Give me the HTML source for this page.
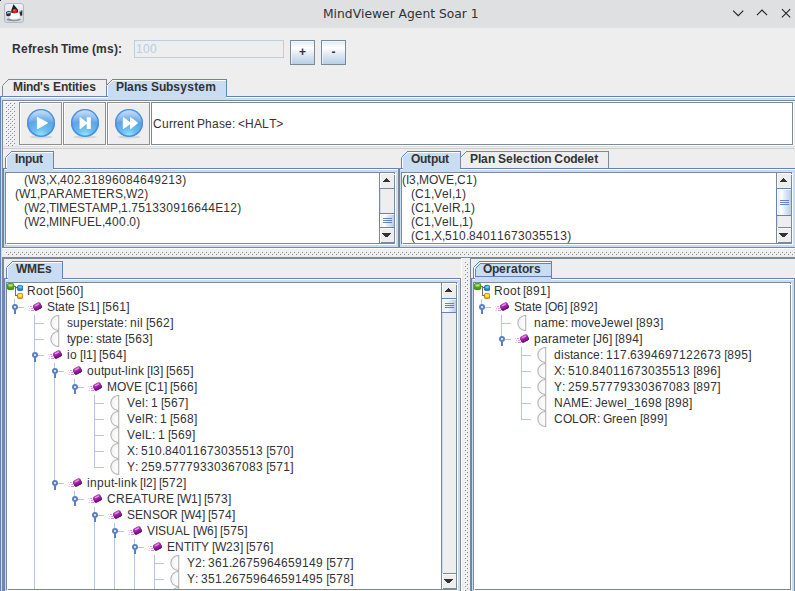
<!DOCTYPE html>
<html lang="en"><head><meta charset="utf-8">
<title>MindViewer Agent Soar 1</title>
<style>
html,body{margin:0;padding:0}
body{width:795px;height:591px;overflow:hidden;background:#eeeeee;position:relative;
 font-family:"Liberation Sans",sans-serif;font-size:12px;color:#333333;
 font-kerning:none;font-variant-ligatures:none;-webkit-font-smoothing:antialiased}
#app{position:absolute;left:0;top:0;width:795px;height:591px;overflow:hidden}
#app i,#app .abs,#app .t,#app .btn,#app .clip{position:absolute;display:block}
#app i{font-style:normal}
.clip{overflow:hidden}
.t{line-height:14px;height:14px;white-space:pre}
.b{font-weight:bold}
#titlebar{position:absolute;left:0;top:0;width:795px;height:28px;background:#dee0e2}
#title{position:absolute;left:323px;top:1px;height:27px;line-height:27px;white-space:pre;
 font-family:"DejaVu Sans","Liberation Sans",sans-serif;font-size:12.3px;color:#2f3236}
.btn{border:1px solid #7a8a99;background:linear-gradient(#dde8f3 0%,#fff 30%,#dde8f3 60%,#b8cfe5 100%);box-shadow:inset 1px 1px 0 rgba(255,255,255,.55)}
.tbtn{width:41px;height:41px;border:1px solid #8e8e8e;box-shadow:inset 1px 1px 0 #fbfbfb,1px 1px 0 #fbfbfb}
.thumb{box-sizing:border-box;border:1px solid #6382bf;border-right-color:#7a8a99;background:linear-gradient(90deg,#dde8f3 0%,#fff 30%,#dde8f3 60%,#b8cfe5 100%);box-shadow:inset 1px 1px 0 rgba(255,255,255,.75)}
.bump{background-image:radial-gradient(circle at 1.5px 1.5px,#7a8a99 0.6px,transparent 0.8px),radial-gradient(circle at 3.5px 3.5px,#7a8a99 0.6px,transparent 0.8px),radial-gradient(circle at 0.5px 0.5px,#fff 0.6px,transparent 0.8px),radial-gradient(circle at 2.5px 2.5px,#fff 0.6px,transparent 0.8px);background-size:4px 4px}
.n33{letter-spacing:-0.33px}
.n1{letter-spacing:-0.01px}
.p15{letter-spacing:0.15px}
.p33{letter-spacing:0.33px}
</style></head>
<body>
<svg width="0" height="0" style="position:absolute"><defs>
<linearGradient id="gD" x1="0" y1="0" x2="0" y2="1"><stop offset="0" stop-color="#f1f1f6"/><stop offset="1" stop-color="#d4d6de"/></linearGradient>
<linearGradient id="gG" x1="0" y1="0" x2="0" y2="1"><stop offset="0" stop-color="#86cc3e"/><stop offset="1" stop-color="#378f0a"/></linearGradient>
<linearGradient id="gB" x1="0" y1="0" x2="0" y2="1"><stop offset="0" stop-color="#44aef2"/><stop offset="1" stop-color="#1574c4"/></linearGradient>
<linearGradient id="gY" x1="0" y1="0" x2="0" y2="1"><stop offset="0" stop-color="#ffe033"/><stop offset="1" stop-color="#eda400"/></linearGradient>
<linearGradient id="gP" x1="0" y1="0" x2="0" y2="1"><stop offset="0" stop-color="#d85ade"/><stop offset="0.45" stop-color="#ab1eb3"/><stop offset="1" stop-color="#800b88"/></linearGradient>
<linearGradient id="gPs" x1="0" y1="0" x2="0" y2="1"><stop offset="0" stop-color="#a83ab0"/><stop offset="1" stop-color="#3c0742"/></linearGradient>
<linearGradient id="gGl" x1="0" y1="0" x2="0" y2="1"><stop offset="0" stop-color="#fff" stop-opacity=".5"/><stop offset="1" stop-color="#fff" stop-opacity=".08"/></linearGradient>
<linearGradient id="gL" x1="0" y1="0" x2="1" y2="0"><stop offset="0" stop-color="#f0f0f0"/><stop offset="1" stop-color="#ffffff"/></linearGradient>
<radialGradient id="gT" cx="0.5" cy="0.98" r="0.95"><stop offset="0" stop-color="#96ebfc"/><stop offset="0.3" stop-color="#6cbcf0"/><stop offset="0.7" stop-color="#5a9fe6"/><stop offset="1" stop-color="#8fc0f2"/></radialGradient>
</defs></svg>
<div id="app">
<div id="titlebar">
<svg class="abs" style="left:4px;top:3px" width="20" height="20" viewBox="0 0 20 20">
<rect x="0.5" y="0.5" width="19" height="19" rx="2.5" fill="url(#gD)" stroke="#a9bccf"/>
<ellipse cx="9.6" cy="16.6" rx="7.2" ry="1.6" fill="#4a4a4a" opacity=".5"/>
<path d="M6.4 9 Q10.5 7 14.6 8.4 L16 15.6 Q11 17.6 5.8 15.8 Z" fill="#fafafa"/>
<path d="M9 16.8 Q11 15.6 15.6 15.9 L16 15.6 Q11 17.6 5.8 15.8 Z" fill="#c9c9c9"/>
<path d="M9.4 1.2 Q11.6 3.6 13.8 6.6 L14.2 9.2 Q10.6 11.2 7.2 9.6 L7.4 7 Q8.6 4 9.4 1.2 Z" fill="#1e1e1e"/>
<path d="M2 9 Q4.4 7.6 6.8 8.2 L6.6 12.6 Q4.2 13.6 2.4 12.8 Z" fill="#2b2b2b"/>
<path d="M2.8 9.4 Q4.6 8.4 6.4 8.8 L6.3 10.2 Q4.6 10.4 2.9 10.8 Z" fill="#9fcaf2"/>
<path d="M15.4 9.6 L16 7.4 L16.9 9.6 L17.6 7 L18.4 7.6 L18.2 12.4 L16.6 13 Z" fill="#2b2b2b"/>
<circle cx="10.8" cy="8" r="2.3" fill="#ee1c25"/>
<circle cx="10.2" cy="7.3" r=".8" fill="#ff7a80"/>
</svg>
<i style="left:0;top:0;width:1px;height:1px;background:#2a2a2a"></i>
<div id="title">MindViewer Agent Soar 1</div>
<svg class="abs" style="left:728px;top:4px" width="66" height="20" viewBox="728 4 66 20" fill="none" stroke="#232629" stroke-width="1.1">
<path d="M733.1 10.6 L738.2 15.7 L743.3 10.6"/>
<path d="M756.9 15.2 L762 10.1 L767.1 15.2"/>
<path d="M781.9 9.1 L790.2 17.4 M790.2 9.1 L781.9 17.4"/>
</svg>
</div>
<div class="t b" style="left:12px;top:42px;"><span class="p33">Re</span>f<span class="p33">res</span><span class="n33">h Ti</span><span class="p33">me</span><span class="n33"> </span>(<span class="p33">ms</span>):</div>
<i style="left:134px;top:40px;width:148px;height:16px;border:1px solid #b8cfe5"></i>
<div class="t" style="left:136px;top:42px;color:#b8cfe5;"><span class="p33">100</span></div>
<div class="btn" style="left:290px;top:40px;width:23px;height:23px"><div class="t b" style="left:0px;top:4px;width:23px;text-align:center;"><span class="n1">+</span></div></div>
<div class="btn" style="left:321px;top:40px;width:23px;height:23px"><div class="t b" style="left:0px;top:4px;width:23px;text-align:center;">-</div></div>
<i style="left:0px;top:96px;width:795px;height:4px;background:#c8ddf2;"></i>
<i style="left:0px;top:96px;width:795px;height:1px;background:#6382bf;"></i>
<i style="left:1px;top:97px;width:794px;height:1px;background:#fff;"></i>
<i style="left:0px;top:96px;width:1px;height:495px;background:#6382bf;"></i>
<i style="left:1px;top:97px;width:1px;height:494px;background:#c8ddf2;"></i>
<svg class="abs" style="left:2px;top:79px" width="105" height="21" viewBox="0 0 105 21" shape-rendering="crispEdges"><polyline points="0.5,17 0.5,6.5" fill="none" stroke="#7a8a99"/><polyline points="0.5,6.5 6.5,0.5" fill="none" stroke="#7a8a99" shape-rendering="auto"/><polyline points="6,0.5 105,0.5" fill="none" stroke="#7a8a99"/><polyline points="104.5,0 104.5,17" fill="none" stroke="#7a8a99"/></svg><div class="t b" style="left:13px;top:80px;">M<span class="n33">ind</span><span class="p15">'</span><span class="p33">s</span><span class="n33"> </span>E<span class="n33">n</span>t<span class="n33">i</span>t<span class="n33">i</span><span class="p33">es</span></div><svg class="abs" style="left:106px;top:79px" width="121" height="21" viewBox="0 0 121 21" shape-rendering="crispEdges"><polygon points="0,6 6,0 121,0 121,21 0,21" fill="#c8ddf2"/><polyline points="1.5,18 1.5,6.5 7,1.5 120,1.5" fill="none" stroke="#fff" shape-rendering="auto"/><polyline points="0.5,18 0.5,6.5" fill="none" stroke="#6382bf"/><polyline points="0.5,6.5 6.5,0.5" fill="none" stroke="#6382bf" shape-rendering="auto"/><polyline points="6,0.5 121,0.5" fill="none" stroke="#6382bf"/><polyline points="120.5,0 120.5,18" fill="none" stroke="#6382bf"/></svg><i style="left:106px;top:96px;width:2px;height:1px;background:#6382bf;"></i><i style="left:106px;top:97px;width:2px;height:1px;background:#fff;"></i><i style="left:226px;top:97px;width:1px;height:1px;background:#fff;"></i><div class="t b" style="left:116px;top:80px;">P<span class="n33">l</span><span class="p33">a</span><span class="n33">n</span><span class="p33">s</span><span class="n33"> </span>S<span class="n33">ub</span><span class="p33">sys</span>t<span class="p33">em</span></div>
<i style="left:2px;top:100px;width:793px;height:1px;background:#7a8a99;"></i>
<i style="left:2px;top:100px;width:1px;height:148px;background:#7a8a99;"></i>
<i style="left:2px;top:247px;width:793px;height:1px;background:#7a8a99;"></i>
<i style="left:2px;top:248px;width:793px;height:1px;background:#fff;"></i>
<i style="left:3px;top:101px;width:792px;height:1px;background:#fff;"></i>
<i class="bump" style="left:5px;top:102px;width:10px;height:44px"></i>
<i class="tbtn" style="left:19px;top:102px"></i>
<svg class="abs" style="left:19px;top:102px" width="43" height="43" viewBox="0 0 43 43"><ellipse cx="22" cy="35.1" rx="12" ry="1.4" fill="#000" opacity=".1"/><circle cx="22" cy="21" r="13.9" fill="url(#gT)"/><circle cx="22" cy="21" r="13.2" fill="none" stroke="#4b90e1" stroke-width="1.6"/><path d="M9.2 21 A12.8 12.8 0 0 1 34.8 21 Q22 15.5 9.2 21Z" fill="url(#gGl)"/><g transform="translate(2.4 2.6)"><path d="M15.5 13.2 Q15.5 12.1 16.5 12.6 L26.1 17.7 Q27 18.3 26.1 18.8 L16.5 24.3 Q15.5 24.9 15.5 23.8 Z" fill="#fff"/></g></svg>
<i class="tbtn" style="left:63px;top:102px"></i>
<svg class="abs" style="left:63px;top:102px" width="43" height="43" viewBox="0 0 43 43"><ellipse cx="22" cy="35.1" rx="12" ry="1.4" fill="#000" opacity=".1"/><circle cx="22" cy="21" r="13.9" fill="url(#gT)"/><circle cx="22" cy="21" r="13.2" fill="none" stroke="#4b90e1" stroke-width="1.6"/><path d="M9.2 21 A12.8 12.8 0 0 1 34.8 21 Q22 15.5 9.2 21Z" fill="url(#gGl)"/><g transform="translate(2.4 2.6)"><path d="M14.2 13 Q14.2 12.2 15 12.7 L21.3 17.6 V12.6 H25.4 V24.4 H21.3 V19.4 L15 24.3 Q14.2 24.8 14.2 24 Z" fill="#fff"/></g></svg>
<i class="tbtn" style="left:107px;top:102px"></i>
<svg class="abs" style="left:107px;top:102px" width="43" height="43" viewBox="0 0 43 43"><ellipse cx="22" cy="35.1" rx="12" ry="1.4" fill="#000" opacity=".1"/><circle cx="22" cy="21" r="13.9" fill="url(#gT)"/><circle cx="22" cy="21" r="13.2" fill="none" stroke="#4b90e1" stroke-width="1.6"/><path d="M9.2 21 A12.8 12.8 0 0 1 34.8 21 Q22 15.5 9.2 21Z" fill="url(#gGl)"/><g transform="translate(2.4 2.6)"><path d="M13.4 13 Q13.4 12.2 14.2 12.7 L20.6 17.4 V13 Q20.6 12.2 21.4 12.7 L28.2 17.9 Q28.8 18.4 28.2 18.9 L21.4 24.3 Q20.6 24.8 20.6 24 V19.6 L14.2 24.3 Q13.4 24.8 13.4 24 Z" fill="#fff"/></g></svg>
<i style="left:151px;top:102px;width:640px;height:41px;background:#fff;border:1px solid #7a8a99"></i>
<i style="left:793px;top:102px;width:1px;height:44px;background:#fff;"></i>
<i style="left:151px;top:145px;width:643px;height:1px;background:#fff;"></i>
<div class="t" style="left:153px;top:117px;"><span class="p33">Cu</span>rr<span class="p33">en</span><span class="n33">t </span>P<span class="p33">ha</span>s<span class="p33">e</span><span class="n33">: </span><span class="n1">&lt;</span><span class="p33">H</span>A<span class="p33">L</span><span class="n33">T</span><span class="n1">&gt;</span></div>
<i style="left:3px;top:146px;width:792px;height:1px;background:#dedede;"></i>
<i style="left:3px;top:148px;width:792px;height:1px;background:#cccccc;"></i>
<i style="left:3px;top:168px;width:396px;height:80px;background:#c8ddf2;"></i><i style="left:3px;top:168px;width:396px;height:1px;background:#6382bf;"></i><i style="left:4px;top:169px;width:394px;height:1px;background:#fff;"></i><i style="left:3px;top:168px;width:1px;height:80px;background:#6382bf;"></i><i style="left:4px;top:169px;width:1px;height:78px;background:#c8ddf2;"></i><i style="left:3px;top:247px;width:396px;height:1px;background:#7a8a99;"></i><i style="left:398px;top:168px;width:1px;height:80px;background:#7a8a99;"></i>
<svg class="abs" style="left:5px;top:151px" width="49" height="21" viewBox="0 0 49 21" shape-rendering="crispEdges"><polygon points="0,6 6,0 49,0 49,21 0,21" fill="#c8ddf2"/><polyline points="1.5,18 1.5,6.5 7,1.5 48,1.5" fill="none" stroke="#fff" shape-rendering="auto"/><polyline points="0.5,18 0.5,6.5" fill="none" stroke="#6382bf"/><polyline points="0.5,6.5 6.5,0.5" fill="none" stroke="#6382bf" shape-rendering="auto"/><polyline points="6,0.5 49,0.5" fill="none" stroke="#6382bf"/><polyline points="48.5,0 48.5,18" fill="none" stroke="#6382bf"/></svg><i style="left:5px;top:168px;width:2px;height:1px;background:#6382bf;"></i><i style="left:5px;top:169px;width:2px;height:1px;background:#fff;"></i><i style="left:53px;top:169px;width:1px;height:1px;background:#fff;"></i><div class="t b" style="left:15px;top:152px;"><span class="n33">Inpu</span>t</div>
<i style="left:5px;top:172px;width:390px;height:72px;background:#fff;box-shadow:inset 0 0 0 1px #7a8a99;"></i><i style="left:395px;top:173px;width:1px;height:72px;background:#fff;"></i><i style="left:6px;top:244px;width:390px;height:1px;background:#fff;"></i><i style="left:394px;top:174px;width:1px;height:1px;background:#eeeeee;"></i><i style="left:6px;top:243px;width:1px;height:1px;background:#eeeeee;"></i>
<div class="t" style="left:24px;top:173px;">(<span class="n33">W</span><span class="p33">3</span><span class="n33">,</span>X<span class="n33">,</span><span class="p33">402</span><span class="n33">.</span><span class="p33">31896084649213</span>)</div>
<div class="t" style="left:15px;top:187px;">(<span class="n33">W</span><span class="p33">1</span><span class="n33">,</span>PA<span class="p33">R</span>AME<span class="n33">T</span>E<span class="p33">R</span>S<span class="n33">,W</span><span class="p33">2</span>)</div>
<div class="t" style="left:24px;top:201px;">(<span class="n33">W</span><span class="p33">2</span><span class="n33">,TI</span>MES<span class="n33">T</span>AMP<span class="n33">,</span><span class="p33">1</span><span class="n33">.</span><span class="p33">751330916644</span>E<span class="p33">12</span>)</div>
<div class="t" style="left:24px;top:215px;">(<span class="n33">W</span><span class="p33">2</span><span class="n33">,</span>M<span class="n33">I</span><span class="p33">N</span><span class="n33">F</span><span class="p33">U</span>E<span class="p33">L</span><span class="n33">,</span><span class="p33">400</span><span class="n33">.</span><span class="p33">0</span>)</div>
<i style="left:380px;top:173px;width:14px;height:70px;background:#eeeeee;"></i><i style="left:379px;top:173px;width:1px;height:70px;background:#7a8a99;"></i><i style="left:380px;top:189px;width:1px;height:38px;background:#c8ddf2;"></i><i style="left:380px;top:173px;width:14px;height:1px;background:#fff;"></i><i style="left:380px;top:173px;width:1px;height:15px;background:#fff;"></i><i style="left:379px;top:188px;width:15px;height:1px;background:#7a8a99;"></i><i style="left:386px;top:178px;width:1px;height:1px;background:#333;"></i><i style="left:385px;top:179px;width:3px;height:1px;background:#333;"></i><i style="left:384px;top:180px;width:5px;height:1px;background:#333;"></i><i style="left:383px;top:181px;width:7px;height:1px;background:#333;"></i><i style="left:381px;top:227px;width:13px;height:1px;background:#7a8a99;"></i><i style="left:380px;top:228px;width:14px;height:1px;background:#fff;"></i><i style="left:380px;top:227px;width:1px;height:16px;background:#fff;"></i><i style="left:381px;top:242px;width:13px;height:1px;background:#7a8a99;"></i><i style="left:382px;top:233px;width:9px;height:1px;background:#333;"></i><i style="left:383px;top:234px;width:7px;height:1px;background:#333;"></i><i style="left:384px;top:235px;width:5px;height:1px;background:#333;"></i><i style="left:385px;top:236px;width:3px;height:1px;background:#333;"></i><i class="thumb" style="left:379px;top:213px;width:16px;height:15px"></i><i style="left:383px;top:218px;width:9px;height:1px;background:#6382bf;"></i><i style="left:383px;top:220px;width:9px;height:1px;background:#6382bf;"></i><i style="left:383px;top:222px;width:9px;height:1px;background:#6382bf;"></i>
<i style="left:399px;top:168px;width:402px;height:80px;background:#c8ddf2;"></i><i style="left:399px;top:168px;width:402px;height:1px;background:#6382bf;"></i><i style="left:400px;top:169px;width:400px;height:1px;background:#fff;"></i><i style="left:399px;top:168px;width:1px;height:80px;background:#6382bf;"></i><i style="left:400px;top:169px;width:1px;height:78px;background:#c8ddf2;"></i><i style="left:399px;top:247px;width:402px;height:1px;background:#7a8a99;"></i><i style="left:800px;top:168px;width:1px;height:80px;background:#7a8a99;"></i>
<svg class="abs" style="left:401px;top:151px" width="60" height="21" viewBox="0 0 60 21" shape-rendering="crispEdges"><polygon points="0,6 6,0 60,0 60,21 0,21" fill="#c8ddf2"/><polyline points="1.5,18 1.5,6.5 7,1.5 59,1.5" fill="none" stroke="#fff" shape-rendering="auto"/><polyline points="0.5,18 0.5,6.5" fill="none" stroke="#6382bf"/><polyline points="0.5,6.5 6.5,0.5" fill="none" stroke="#6382bf" shape-rendering="auto"/><polyline points="6,0.5 60,0.5" fill="none" stroke="#6382bf"/><polyline points="59.5,0 59.5,18" fill="none" stroke="#6382bf"/></svg><i style="left:401px;top:168px;width:2px;height:1px;background:#6382bf;"></i><i style="left:401px;top:169px;width:2px;height:1px;background:#fff;"></i><i style="left:460px;top:169px;width:1px;height:1px;background:#fff;"></i><div class="t b" style="left:411px;top:152px;"><span class="n33">Ou</span>t<span class="n33">pu</span>t</div><svg class="abs" style="left:460px;top:151px" width="149" height="21" viewBox="0 0 149 21" shape-rendering="crispEdges"><polyline points="0.5,17 0.5,6.5" fill="none" stroke="#7a8a99"/><polyline points="0.5,6.5 6.5,0.5" fill="none" stroke="#7a8a99" shape-rendering="auto"/><polyline points="6,0.5 149,0.5" fill="none" stroke="#7a8a99"/><polyline points="148.5,0 148.5,17" fill="none" stroke="#7a8a99"/></svg><div class="t b" style="left:470px;top:152px;">P<span class="n33">l</span><span class="p33">a</span><span class="n33">n </span>S<span class="p33">e</span><span class="n33">l</span><span class="p33">ec</span>t<span class="n33">ion </span><span class="p33">C</span><span class="n33">od</span><span class="p33">e</span><span class="n33">l</span><span class="p33">e</span>t</div>
<i style="left:401px;top:172px;width:391px;height:72px;background:#fff;box-shadow:inset 0 0 0 1px #7a8a99;"></i><i style="left:792px;top:173px;width:1px;height:72px;background:#fff;"></i><i style="left:402px;top:244px;width:391px;height:1px;background:#fff;"></i><i style="left:791px;top:174px;width:1px;height:1px;background:#eeeeee;"></i><i style="left:402px;top:243px;width:1px;height:1px;background:#eeeeee;"></i>
<div class="t" style="left:402px;top:173px;">(<span class="n33">I</span><span class="p33">3</span><span class="n33">,</span>M<span class="n33">O</span>VE<span class="n33">,</span><span class="p33">C1</span>)</div>
<div class="t" style="left:411px;top:187px;">(<span class="p33">C1</span><span class="n33">,</span>V<span class="p33">el</span><span class="n33">,</span><span class="p33">1</span>)</div>
<div class="t" style="left:411px;top:201px;">(<span class="p33">C1</span><span class="n33">,</span>V<span class="p33">elR</span><span class="n33">,</span><span class="p33">1</span>)</div>
<div class="t" style="left:411px;top:215px;">(<span class="p33">C1</span><span class="n33">,</span>V<span class="p33">elL</span><span class="n33">,</span><span class="p33">1</span>)</div>
<div class="t" style="left:411px;top:229px;">(<span class="p33">C1</span><span class="n33">,</span>X<span class="n33">,</span><span class="p33">510</span><span class="n33">.</span><span class="p33">84011673035513</span>)</div>
<i style="left:777px;top:173px;width:14px;height:70px;background:#eeeeee;"></i><i style="left:776px;top:173px;width:1px;height:70px;background:#7a8a99;"></i><i style="left:777px;top:189px;width:1px;height:38px;background:#c8ddf2;"></i><i style="left:777px;top:173px;width:14px;height:1px;background:#fff;"></i><i style="left:777px;top:173px;width:1px;height:15px;background:#fff;"></i><i style="left:776px;top:188px;width:15px;height:1px;background:#7a8a99;"></i><i style="left:783px;top:178px;width:1px;height:1px;background:#333;"></i><i style="left:782px;top:179px;width:3px;height:1px;background:#333;"></i><i style="left:781px;top:180px;width:5px;height:1px;background:#333;"></i><i style="left:780px;top:181px;width:7px;height:1px;background:#333;"></i><i style="left:778px;top:227px;width:13px;height:1px;background:#7a8a99;"></i><i style="left:777px;top:228px;width:14px;height:1px;background:#fff;"></i><i style="left:777px;top:227px;width:1px;height:16px;background:#fff;"></i><i style="left:778px;top:242px;width:13px;height:1px;background:#7a8a99;"></i><i style="left:779px;top:233px;width:9px;height:1px;background:#333;"></i><i style="left:780px;top:234px;width:7px;height:1px;background:#333;"></i><i style="left:781px;top:235px;width:5px;height:1px;background:#333;"></i><i style="left:782px;top:236px;width:3px;height:1px;background:#333;"></i><i class="thumb" style="left:776px;top:188px;width:16px;height:28px"></i><i style="left:780px;top:200px;width:9px;height:1px;background:#6382bf;"></i><i style="left:780px;top:202px;width:9px;height:1px;background:#6382bf;"></i><i style="left:780px;top:204px;width:9px;height:1px;background:#6382bf;"></i>
<i class="bump" style="left:5px;top:251px;width:790px;height:4px"></i>
<i style="left:2px;top:257px;width:793px;height:1px;background:#7a8a99;"></i>
<i style="left:2px;top:257px;width:1px;height:334px;background:#7a8a99;"></i>
<i style="left:3px;top:258px;width:458px;height:1px;background:#7a8a99;"></i>
<i style="left:3px;top:258px;width:1px;height:333px;background:#7a8a99;"></i>
<i style="left:470px;top:258px;width:325px;height:1px;background:#7a8a99;"></i>
<i style="left:470px;top:258px;width:1px;height:333px;background:#7a8a99;"></i>
<i style="left:461px;top:258px;width:1px;height:333px;background:#fff;"></i>
<i class="bump" style="left:464px;top:261px;width:4px;height:330px"></i>
<i style="left:4px;top:278px;width:457px;height:323px;background:#c8ddf2;"></i><i style="left:4px;top:278px;width:457px;height:1px;background:#6382bf;"></i><i style="left:5px;top:279px;width:455px;height:1px;background:#fff;"></i><i style="left:4px;top:278px;width:1px;height:323px;background:#6382bf;"></i><i style="left:5px;top:279px;width:1px;height:321px;background:#c8ddf2;"></i><i style="left:4px;top:600px;width:457px;height:1px;background:#7a8a99;"></i><i style="left:460px;top:278px;width:1px;height:323px;background:#7a8a99;"></i>
<svg class="abs" style="left:6px;top:261px" width="57" height="21" viewBox="0 0 57 21" shape-rendering="crispEdges"><polygon points="0,6 6,0 57,0 57,21 0,21" fill="#c8ddf2"/><polyline points="1.5,18 1.5,6.5 7,1.5 56,1.5" fill="none" stroke="#fff" shape-rendering="auto"/><polyline points="0.5,18 0.5,6.5" fill="none" stroke="#6382bf"/><polyline points="0.5,6.5 6.5,0.5" fill="none" stroke="#6382bf" shape-rendering="auto"/><polyline points="6,0.5 57,0.5" fill="none" stroke="#6382bf"/><polyline points="56.5,0 56.5,18" fill="none" stroke="#6382bf"/></svg><i style="left:6px;top:278px;width:2px;height:1px;background:#6382bf;"></i><i style="left:6px;top:279px;width:2px;height:1px;background:#fff;"></i><i style="left:62px;top:279px;width:1px;height:1px;background:#fff;"></i><div class="t b" style="left:16px;top:262px;"><span class="n33">W</span>ME<span class="p33">s</span></div>
<i style="left:6px;top:282px;width:451px;height:308px;background:#fff;box-shadow:inset 0 0 0 1px #7a8a99;"></i><i style="left:457px;top:283px;width:1px;height:308px;background:#fff;"></i><i style="left:7px;top:590px;width:451px;height:1px;background:#fff;"></i><i style="left:456px;top:284px;width:1px;height:1px;background:#eeeeee;"></i><i style="left:7px;top:589px;width:1px;height:1px;background:#eeeeee;"></i>
<div class="clip" style="left:7px;top:283px;width:434px;height:306px">
<i style="left:7px;top:16px;width:1px;height:5px;background:#b3c7e3;"></i><i style="left:27px;top:32px;width:1px;height:274px;background:#b3c7e3;"></i><i style="left:47px;top:80px;width:1px;height:121px;background:#b3c7e3;"></i><i style="left:67px;top:96px;width:1px;height:9px;background:#b3c7e3;"></i><i style="left:87px;top:112px;width:1px;height:73px;background:#b3c7e3;"></i><i style="left:67px;top:208px;width:1px;height:9px;background:#b3c7e3;"></i><i style="left:87px;top:224px;width:1px;height:82px;background:#b3c7e3;"></i><i style="left:107px;top:240px;width:1px;height:66px;background:#b3c7e3;"></i><i style="left:127px;top:256px;width:1px;height:50px;background:#b3c7e3;"></i><i style="left:147px;top:272px;width:1px;height:34px;background:#b3c7e3;"></i><svg class="abs" style="left:0px;top:0px" width="16" height="16" viewBox="0 0 16 16"><path d="M7 3.5H8.5V12.5H10.5M8.5 4.5H10.5" fill="none" stroke="#6e6e6e" stroke-width="1" shape-rendering="crispEdges"/><rect x="0.4" y="0.4" width="6.4" height="6.2" rx="1.4" fill="url(#gG)" stroke="#2f7d0a" stroke-width=".8"/><rect x="1.6" y="1.4" width="4" height="2.2" rx=".8" fill="#c8f08a" opacity=".75"/><rect x="10.4" y="2.4" width="5.4" height="5.2" rx="1.4" fill="url(#gB)" stroke="#1263ad" stroke-width=".8"/><rect x="11.5" y="3.3" width="3.2" height="2" rx=".8" fill="#7fd2ff" opacity=".75"/><rect x="10.4" y="10.4" width="5.4" height="5.2" rx="1.4" fill="url(#gY)" stroke="#b96a0a" stroke-width=".8"/><rect x="11.5" y="11.4" width="3.2" height="2.4" rx=".8" fill="#fff27a" opacity=".8"/></svg><div class="t" style="left:20px;top:1px;"><span class="p33">Roo</span><span class="n33">t [</span><span class="p33">560</span><span class="n33">]</span></div><i style="left:11px;top:24px;width:6px;height:1px;background:#b3c7e3;"></i><svg class="abs" style="left:4px;top:16px" width="8" height="16" viewBox="0 0 8 16"><rect x="3" y="10.5" width="2" height="4.5" fill="#5b7fc6"/><circle cx="4" cy="8" r="2" fill="#fff" stroke="#5b7fc6" stroke-width="2"/></svg><svg class="abs" style="left:20px;top:16px" width="16" height="16" viewBox="0 0 16 16"><g fill="#d9a6da"><rect x="1" y="7" width="1" height="1" opacity=".5"/><rect x="3" y="7" width="2" height="1"/><rect x="2" y="9" width="1" height="1" opacity=".8"/><rect x="4" y="9" width="2" height="1"/><rect x="1" y="11" width="2" height="1" opacity=".6"/><rect x="4" y="11" width="3" height="1" fill="#cf8fd0"/></g><g transform="rotate(-27 10.4 7.5)"><rect x="6.6" y="4.6" width="7.6" height="5.8" rx="1.7" fill="url(#gP)" stroke="url(#gPs)" stroke-width=".9"/><rect x="8.6" y="5.2" width="4.6" height="1.4" rx=".7" fill="#f6c4f2" opacity=".6"/></g></svg><div class="t" style="left:40px;top:17px;">S<span class="n33">t</span><span class="p33">a</span><span class="n33">t</span><span class="p33">e</span><span class="n33"> [</span>S<span class="p33">1</span><span class="n33">] [</span><span class="p33">561</span><span class="n33">]</span></div><i style="left:27px;top:40px;width:10px;height:1px;background:#b3c7e3;"></i><svg class="abs" style="left:40px;top:32px" width="16" height="16" viewBox="0 0 16 16"><path d="M11.7 0.5 A7.9 7.5 0 0 0 11.7 15.5 Z" fill="url(#gL)" stroke="#b5b5b5" stroke-width="1.1"/></svg><div class="t" style="left:60px;top:33px;">s<span class="p33">upe</span>rs<span class="n33">t</span><span class="p33">a</span><span class="n33">t</span><span class="p33">e</span><span class="n33">: </span><span class="p33">nil</span><span class="n33"> [</span><span class="p33">562</span><span class="n33">]</span></div><i style="left:27px;top:56px;width:10px;height:1px;background:#b3c7e3;"></i><svg class="abs" style="left:40px;top:48px" width="16" height="16" viewBox="0 0 16 16"><path d="M11.7 0.5 A7.9 7.5 0 0 0 11.7 15.5 Z" fill="url(#gL)" stroke="#b5b5b5" stroke-width="1.1"/></svg><div class="t" style="left:60px;top:49px;"><span class="n33">t</span>y<span class="p33">pe</span><span class="n33">: </span>s<span class="n33">t</span><span class="p33">a</span><span class="n33">t</span><span class="p33">e</span><span class="n33"> [</span><span class="p33">563</span><span class="n33">]</span></div><i style="left:31px;top:72px;width:6px;height:1px;background:#b3c7e3;"></i><svg class="abs" style="left:24px;top:64px" width="8" height="16" viewBox="0 0 8 16"><rect x="3" y="10.5" width="2" height="4.5" fill="#5b7fc6"/><circle cx="4" cy="8" r="2" fill="#fff" stroke="#5b7fc6" stroke-width="2"/></svg><svg class="abs" style="left:40px;top:64px" width="16" height="16" viewBox="0 0 16 16"><g fill="#d9a6da"><rect x="1" y="7" width="1" height="1" opacity=".5"/><rect x="3" y="7" width="2" height="1"/><rect x="2" y="9" width="1" height="1" opacity=".8"/><rect x="4" y="9" width="2" height="1"/><rect x="1" y="11" width="2" height="1" opacity=".6"/><rect x="4" y="11" width="3" height="1" fill="#cf8fd0"/></g><g transform="rotate(-27 10.4 7.5)"><rect x="6.6" y="4.6" width="7.6" height="5.8" rx="1.7" fill="url(#gP)" stroke="url(#gPs)" stroke-width=".9"/><rect x="8.6" y="5.2" width="4.6" height="1.4" rx=".7" fill="#f6c4f2" opacity=".6"/></g></svg><div class="t" style="left:60px;top:65px;"><span class="p33">io</span><span class="n33"> [I</span><span class="p33">1</span><span class="n33">] [</span><span class="p33">564</span><span class="n33">]</span></div><i style="left:51px;top:88px;width:6px;height:1px;background:#b3c7e3;"></i><svg class="abs" style="left:44px;top:80px" width="8" height="16" viewBox="0 0 8 16"><rect x="3" y="10.5" width="2" height="4.5" fill="#5b7fc6"/><circle cx="4" cy="8" r="2" fill="#fff" stroke="#5b7fc6" stroke-width="2"/></svg><svg class="abs" style="left:60px;top:80px" width="16" height="16" viewBox="0 0 16 16"><g fill="#d9a6da"><rect x="1" y="7" width="1" height="1" opacity=".5"/><rect x="3" y="7" width="2" height="1"/><rect x="2" y="9" width="1" height="1" opacity=".8"/><rect x="4" y="9" width="2" height="1"/><rect x="1" y="11" width="2" height="1" opacity=".6"/><rect x="4" y="11" width="3" height="1" fill="#cf8fd0"/></g><g transform="rotate(-27 10.4 7.5)"><rect x="6.6" y="4.6" width="7.6" height="5.8" rx="1.7" fill="url(#gP)" stroke="url(#gPs)" stroke-width=".9"/><rect x="8.6" y="5.2" width="4.6" height="1.4" rx=".7" fill="#f6c4f2" opacity=".6"/></g></svg><div class="t" style="left:80px;top:81px;"><span class="p33">ou</span><span class="n33">t</span><span class="p33">pu</span><span class="n33">t</span>-<span class="p33">lin</span>k<span class="n33"> [I</span><span class="p33">3</span><span class="n33">] [</span><span class="p33">565</span><span class="n33">]</span></div><i style="left:71px;top:104px;width:6px;height:1px;background:#b3c7e3;"></i><svg class="abs" style="left:64px;top:96px" width="8" height="16" viewBox="0 0 8 16"><rect x="3" y="10.5" width="2" height="4.5" fill="#5b7fc6"/><circle cx="4" cy="8" r="2" fill="#fff" stroke="#5b7fc6" stroke-width="2"/></svg><svg class="abs" style="left:80px;top:96px" width="16" height="16" viewBox="0 0 16 16"><g fill="#d9a6da"><rect x="1" y="7" width="1" height="1" opacity=".5"/><rect x="3" y="7" width="2" height="1"/><rect x="2" y="9" width="1" height="1" opacity=".8"/><rect x="4" y="9" width="2" height="1"/><rect x="1" y="11" width="2" height="1" opacity=".6"/><rect x="4" y="11" width="3" height="1" fill="#cf8fd0"/></g><g transform="rotate(-27 10.4 7.5)"><rect x="6.6" y="4.6" width="7.6" height="5.8" rx="1.7" fill="url(#gP)" stroke="url(#gPs)" stroke-width=".9"/><rect x="8.6" y="5.2" width="4.6" height="1.4" rx=".7" fill="#f6c4f2" opacity=".6"/></g></svg><div class="t" style="left:100px;top:97px;">M<span class="n33">O</span>VE<span class="n33"> [</span><span class="p33">C1</span><span class="n33">] [</span><span class="p33">566</span><span class="n33">]</span></div><i style="left:87px;top:120px;width:10px;height:1px;background:#b3c7e3;"></i><svg class="abs" style="left:100px;top:112px" width="16" height="16" viewBox="0 0 16 16"><path d="M11.7 0.5 A7.9 7.5 0 0 0 11.7 15.5 Z" fill="url(#gL)" stroke="#b5b5b5" stroke-width="1.1"/></svg><div class="t" style="left:120px;top:113px;">V<span class="p33">el</span><span class="n33">: </span><span class="p33">1</span><span class="n33"> [</span><span class="p33">567</span><span class="n33">]</span></div><i style="left:87px;top:136px;width:10px;height:1px;background:#b3c7e3;"></i><svg class="abs" style="left:100px;top:128px" width="16" height="16" viewBox="0 0 16 16"><path d="M11.7 0.5 A7.9 7.5 0 0 0 11.7 15.5 Z" fill="url(#gL)" stroke="#b5b5b5" stroke-width="1.1"/></svg><div class="t" style="left:120px;top:129px;">V<span class="p33">elR</span><span class="n33">: </span><span class="p33">1</span><span class="n33"> [</span><span class="p33">568</span><span class="n33">]</span></div><i style="left:87px;top:152px;width:10px;height:1px;background:#b3c7e3;"></i><svg class="abs" style="left:100px;top:144px" width="16" height="16" viewBox="0 0 16 16"><path d="M11.7 0.5 A7.9 7.5 0 0 0 11.7 15.5 Z" fill="url(#gL)" stroke="#b5b5b5" stroke-width="1.1"/></svg><div class="t" style="left:120px;top:145px;">V<span class="p33">elL</span><span class="n33">: </span><span class="p33">1</span><span class="n33"> [</span><span class="p33">569</span><span class="n33">]</span></div><i style="left:87px;top:168px;width:10px;height:1px;background:#b3c7e3;"></i><svg class="abs" style="left:100px;top:160px" width="16" height="16" viewBox="0 0 16 16"><path d="M11.7 0.5 A7.9 7.5 0 0 0 11.7 15.5 Z" fill="url(#gL)" stroke="#b5b5b5" stroke-width="1.1"/></svg><div class="t" style="left:120px;top:161px;">X<span class="n33">: </span><span class="p33">510</span><span class="n33">.</span><span class="p33">84011673035513</span><span class="n33"> [</span><span class="p33">570</span><span class="n33">]</span></div><i style="left:87px;top:184px;width:10px;height:1px;background:#b3c7e3;"></i><svg class="abs" style="left:100px;top:176px" width="16" height="16" viewBox="0 0 16 16"><path d="M11.7 0.5 A7.9 7.5 0 0 0 11.7 15.5 Z" fill="url(#gL)" stroke="#b5b5b5" stroke-width="1.1"/></svg><div class="t" style="left:120px;top:177px;">Y<span class="n33">: </span><span class="p33">259</span><span class="n33">.</span><span class="p33">57779330367083</span><span class="n33"> [</span><span class="p33">571</span><span class="n33">]</span></div><i style="left:51px;top:200px;width:6px;height:1px;background:#b3c7e3;"></i><svg class="abs" style="left:44px;top:192px" width="8" height="16" viewBox="0 0 8 16"><rect x="3" y="10.5" width="2" height="4.5" fill="#5b7fc6"/><circle cx="4" cy="8" r="2" fill="#fff" stroke="#5b7fc6" stroke-width="2"/></svg><svg class="abs" style="left:60px;top:192px" width="16" height="16" viewBox="0 0 16 16"><g fill="#d9a6da"><rect x="1" y="7" width="1" height="1" opacity=".5"/><rect x="3" y="7" width="2" height="1"/><rect x="2" y="9" width="1" height="1" opacity=".8"/><rect x="4" y="9" width="2" height="1"/><rect x="1" y="11" width="2" height="1" opacity=".6"/><rect x="4" y="11" width="3" height="1" fill="#cf8fd0"/></g><g transform="rotate(-27 10.4 7.5)"><rect x="6.6" y="4.6" width="7.6" height="5.8" rx="1.7" fill="url(#gP)" stroke="url(#gPs)" stroke-width=".9"/><rect x="8.6" y="5.2" width="4.6" height="1.4" rx=".7" fill="#f6c4f2" opacity=".6"/></g></svg><div class="t" style="left:80px;top:193px;"><span class="p33">inpu</span><span class="n33">t</span>-<span class="p33">lin</span>k<span class="n33"> [I</span><span class="p33">2</span><span class="n33">] [</span><span class="p33">572</span><span class="n33">]</span></div><i style="left:71px;top:216px;width:6px;height:1px;background:#b3c7e3;"></i><svg class="abs" style="left:64px;top:208px" width="8" height="16" viewBox="0 0 8 16"><rect x="3" y="10.5" width="2" height="4.5" fill="#5b7fc6"/><circle cx="4" cy="8" r="2" fill="#fff" stroke="#5b7fc6" stroke-width="2"/></svg><svg class="abs" style="left:80px;top:208px" width="16" height="16" viewBox="0 0 16 16"><g fill="#d9a6da"><rect x="1" y="7" width="1" height="1" opacity=".5"/><rect x="3" y="7" width="2" height="1"/><rect x="2" y="9" width="1" height="1" opacity=".8"/><rect x="4" y="9" width="2" height="1"/><rect x="1" y="11" width="2" height="1" opacity=".6"/><rect x="4" y="11" width="3" height="1" fill="#cf8fd0"/></g><g transform="rotate(-27 10.4 7.5)"><rect x="6.6" y="4.6" width="7.6" height="5.8" rx="1.7" fill="url(#gP)" stroke="url(#gPs)" stroke-width=".9"/><rect x="8.6" y="5.2" width="4.6" height="1.4" rx=".7" fill="#f6c4f2" opacity=".6"/></g></svg><div class="t" style="left:100px;top:209px;"><span class="p33">CR</span>EA<span class="n33">T</span><span class="p33">UR</span>E<span class="n33"> [W</span><span class="p33">1</span><span class="n33">] [</span><span class="p33">573</span><span class="n33">]</span></div><i style="left:91px;top:232px;width:6px;height:1px;background:#b3c7e3;"></i><svg class="abs" style="left:84px;top:224px" width="8" height="16" viewBox="0 0 8 16"><rect x="3" y="10.5" width="2" height="4.5" fill="#5b7fc6"/><circle cx="4" cy="8" r="2" fill="#fff" stroke="#5b7fc6" stroke-width="2"/></svg><svg class="abs" style="left:100px;top:224px" width="16" height="16" viewBox="0 0 16 16"><g fill="#d9a6da"><rect x="1" y="7" width="1" height="1" opacity=".5"/><rect x="3" y="7" width="2" height="1"/><rect x="2" y="9" width="1" height="1" opacity=".8"/><rect x="4" y="9" width="2" height="1"/><rect x="1" y="11" width="2" height="1" opacity=".6"/><rect x="4" y="11" width="3" height="1" fill="#cf8fd0"/></g><g transform="rotate(-27 10.4 7.5)"><rect x="6.6" y="4.6" width="7.6" height="5.8" rx="1.7" fill="url(#gP)" stroke="url(#gPs)" stroke-width=".9"/><rect x="8.6" y="5.2" width="4.6" height="1.4" rx=".7" fill="#f6c4f2" opacity=".6"/></g></svg><div class="t" style="left:120px;top:225px;">SE<span class="p33">N</span>S<span class="n33">O</span><span class="p33">R</span><span class="n33"> [W</span><span class="p33">4</span><span class="n33">] [</span><span class="p33">574</span><span class="n33">]</span></div><i style="left:111px;top:248px;width:6px;height:1px;background:#b3c7e3;"></i><svg class="abs" style="left:104px;top:240px" width="8" height="16" viewBox="0 0 8 16"><rect x="3" y="10.5" width="2" height="4.5" fill="#5b7fc6"/><circle cx="4" cy="8" r="2" fill="#fff" stroke="#5b7fc6" stroke-width="2"/></svg><svg class="abs" style="left:120px;top:240px" width="16" height="16" viewBox="0 0 16 16"><g fill="#d9a6da"><rect x="1" y="7" width="1" height="1" opacity=".5"/><rect x="3" y="7" width="2" height="1"/><rect x="2" y="9" width="1" height="1" opacity=".8"/><rect x="4" y="9" width="2" height="1"/><rect x="1" y="11" width="2" height="1" opacity=".6"/><rect x="4" y="11" width="3" height="1" fill="#cf8fd0"/></g><g transform="rotate(-27 10.4 7.5)"><rect x="6.6" y="4.6" width="7.6" height="5.8" rx="1.7" fill="url(#gP)" stroke="url(#gPs)" stroke-width=".9"/><rect x="8.6" y="5.2" width="4.6" height="1.4" rx=".7" fill="#f6c4f2" opacity=".6"/></g></svg><div class="t" style="left:140px;top:241px;">V<span class="n33">I</span>S<span class="p33">U</span>A<span class="p33">L</span><span class="n33"> [W</span><span class="p33">6</span><span class="n33">] [</span><span class="p33">575</span><span class="n33">]</span></div><i style="left:131px;top:264px;width:6px;height:1px;background:#b3c7e3;"></i><svg class="abs" style="left:124px;top:256px" width="8" height="16" viewBox="0 0 8 16"><rect x="3" y="10.5" width="2" height="4.5" fill="#5b7fc6"/><circle cx="4" cy="8" r="2" fill="#fff" stroke="#5b7fc6" stroke-width="2"/></svg><svg class="abs" style="left:140px;top:256px" width="16" height="16" viewBox="0 0 16 16"><g fill="#d9a6da"><rect x="1" y="7" width="1" height="1" opacity=".5"/><rect x="3" y="7" width="2" height="1"/><rect x="2" y="9" width="1" height="1" opacity=".8"/><rect x="4" y="9" width="2" height="1"/><rect x="1" y="11" width="2" height="1" opacity=".6"/><rect x="4" y="11" width="3" height="1" fill="#cf8fd0"/></g><g transform="rotate(-27 10.4 7.5)"><rect x="6.6" y="4.6" width="7.6" height="5.8" rx="1.7" fill="url(#gP)" stroke="url(#gPs)" stroke-width=".9"/><rect x="8.6" y="5.2" width="4.6" height="1.4" rx=".7" fill="#f6c4f2" opacity=".6"/></g></svg><div class="t" style="left:160px;top:257px;">E<span class="p33">N</span><span class="n33">TIT</span>Y<span class="n33"> [W</span><span class="p33">23</span><span class="n33">] [</span><span class="p33">576</span><span class="n33">]</span></div><i style="left:147px;top:280px;width:10px;height:1px;background:#b3c7e3;"></i><svg class="abs" style="left:160px;top:272px" width="16" height="16" viewBox="0 0 16 16"><path d="M11.7 0.5 A7.9 7.5 0 0 0 11.7 15.5 Z" fill="url(#gL)" stroke="#b5b5b5" stroke-width="1.1"/></svg><div class="t" style="left:180px;top:273px;">Y<span class="p33">2</span><span class="n33">: </span><span class="p33">361</span><span class="n33">.</span><span class="p33">2675964659149</span><span class="n33"> [</span><span class="p33">577</span><span class="n33">]</span></div><i style="left:147px;top:296px;width:10px;height:1px;background:#b3c7e3;"></i><svg class="abs" style="left:160px;top:288px" width="16" height="16" viewBox="0 0 16 16"><path d="M11.7 0.5 A7.9 7.5 0 0 0 11.7 15.5 Z" fill="url(#gL)" stroke="#b5b5b5" stroke-width="1.1"/></svg><div class="t" style="left:180px;top:289px;">Y<span class="n33">: </span><span class="p33">351</span><span class="n33">.</span><span class="p33">26759646591495</span><span class="n33"> [</span><span class="p33">578</span><span class="n33">]</span></div><i style="left:147px;top:312px;width:10px;height:1px;background:#b3c7e3;"></i><svg class="abs" style="left:160px;top:304px" width="16" height="16" viewBox="0 0 16 16"><path d="M11.7 0.5 A7.9 7.5 0 0 0 11.7 15.5 Z" fill="url(#gL)" stroke="#b5b5b5" stroke-width="1.1"/></svg>
</div>
<i style="left:442px;top:283px;width:14px;height:306px;background:#eeeeee;"></i><i style="left:441px;top:283px;width:1px;height:306px;background:#7a8a99;"></i><i style="left:442px;top:299px;width:1px;height:274px;background:#c8ddf2;"></i><i style="left:442px;top:283px;width:14px;height:1px;background:#fff;"></i><i style="left:442px;top:283px;width:1px;height:15px;background:#fff;"></i><i style="left:441px;top:298px;width:15px;height:1px;background:#7a8a99;"></i><i style="left:448px;top:288px;width:1px;height:1px;background:#333;"></i><i style="left:447px;top:289px;width:3px;height:1px;background:#333;"></i><i style="left:446px;top:290px;width:5px;height:1px;background:#333;"></i><i style="left:445px;top:291px;width:7px;height:1px;background:#333;"></i><i style="left:443px;top:573px;width:13px;height:1px;background:#7a8a99;"></i><i style="left:442px;top:574px;width:14px;height:1px;background:#fff;"></i><i style="left:442px;top:573px;width:1px;height:16px;background:#fff;"></i><i style="left:443px;top:588px;width:13px;height:1px;background:#7a8a99;"></i><i style="left:444px;top:579px;width:9px;height:1px;background:#333;"></i><i style="left:445px;top:580px;width:7px;height:1px;background:#333;"></i><i style="left:446px;top:581px;width:5px;height:1px;background:#333;"></i><i style="left:447px;top:582px;width:3px;height:1px;background:#333;"></i><i class="thumb" style="left:441px;top:298px;width:16px;height:15px"></i><i style="left:445px;top:303px;width:9px;height:1px;background:#6382bf;"></i><i style="left:445px;top:305px;width:9px;height:1px;background:#6382bf;"></i><i style="left:445px;top:307px;width:9px;height:1px;background:#6382bf;"></i>
<i style="left:471px;top:278px;width:324px;height:323px;background:#c8ddf2;"></i><i style="left:471px;top:278px;width:324px;height:1px;background:#6382bf;"></i><i style="left:472px;top:279px;width:322px;height:1px;background:#fff;"></i><i style="left:471px;top:278px;width:1px;height:323px;background:#6382bf;"></i><i style="left:472px;top:279px;width:1px;height:321px;background:#c8ddf2;"></i><i style="left:471px;top:600px;width:324px;height:1px;background:#7a8a99;"></i><i style="left:794px;top:278px;width:1px;height:323px;background:#7a8a99;"></i>
<svg class="abs" style="left:473px;top:261px" width="79" height="21" viewBox="0 0 79 21" shape-rendering="crispEdges"><polygon points="0,6 6,0 79,0 79,21 0,21" fill="#c8ddf2"/><polyline points="1.5,18 1.5,6.5 7,1.5 78,1.5" fill="none" stroke="#fff" shape-rendering="auto"/><polyline points="0.5,18 0.5,6.5" fill="none" stroke="#6382bf"/><polyline points="0.5,6.5 6.5,0.5" fill="none" stroke="#6382bf" shape-rendering="auto"/><polyline points="6,0.5 79,0.5" fill="none" stroke="#6382bf"/><polyline points="78.5,0 78.5,18" fill="none" stroke="#6382bf"/><polyline points="78,15.5 2.5,15.5 2.5,7.5" fill="none" stroke="#6382bf"/><polyline points="2.5,7.5 7.5,2.5" fill="none" stroke="#6382bf" shape-rendering="auto"/><polyline points="7,2.5 78,2.5" fill="none" stroke="#6382bf"/></svg><i style="left:473px;top:278px;width:2px;height:1px;background:#6382bf;"></i><i style="left:473px;top:279px;width:2px;height:1px;background:#fff;"></i><i style="left:551px;top:279px;width:1px;height:1px;background:#fff;"></i><div class="t b" style="left:483px;top:262px;"><span class="n33">Op</span><span class="p33">era</span>t<span class="n33">o</span><span class="p33">rs</span></div>
<i style="left:473px;top:282px;width:318px;height:308px;background:#fff;box-shadow:inset 0 0 0 1px #7a8a99;"></i><i style="left:791px;top:283px;width:1px;height:308px;background:#fff;"></i><i style="left:474px;top:590px;width:318px;height:1px;background:#fff;"></i><i style="left:790px;top:284px;width:1px;height:1px;background:#eeeeee;"></i><i style="left:474px;top:589px;width:1px;height:1px;background:#eeeeee;"></i>
<div class="clip" style="left:474px;top:283px;width:316px;height:306px">
<i style="left:7px;top:16px;width:1px;height:5px;background:#b3c7e3;"></i><i style="left:27px;top:32px;width:1px;height:25px;background:#b3c7e3;"></i><i style="left:47px;top:64px;width:1px;height:73px;background:#b3c7e3;"></i><svg class="abs" style="left:0px;top:0px" width="16" height="16" viewBox="0 0 16 16"><path d="M7 3.5H8.5V12.5H10.5M8.5 4.5H10.5" fill="none" stroke="#6e6e6e" stroke-width="1" shape-rendering="crispEdges"/><rect x="0.4" y="0.4" width="6.4" height="6.2" rx="1.4" fill="url(#gG)" stroke="#2f7d0a" stroke-width=".8"/><rect x="1.6" y="1.4" width="4" height="2.2" rx=".8" fill="#c8f08a" opacity=".75"/><rect x="10.4" y="2.4" width="5.4" height="5.2" rx="1.4" fill="url(#gB)" stroke="#1263ad" stroke-width=".8"/><rect x="11.5" y="3.3" width="3.2" height="2" rx=".8" fill="#7fd2ff" opacity=".75"/><rect x="10.4" y="10.4" width="5.4" height="5.2" rx="1.4" fill="url(#gY)" stroke="#b96a0a" stroke-width=".8"/><rect x="11.5" y="11.4" width="3.2" height="2.4" rx=".8" fill="#fff27a" opacity=".8"/></svg><div class="t" style="left:20px;top:1px;"><span class="p33">Roo</span><span class="n33">t [</span><span class="p33">891</span><span class="n33">]</span></div><i style="left:11px;top:24px;width:6px;height:1px;background:#b3c7e3;"></i><svg class="abs" style="left:4px;top:16px" width="8" height="16" viewBox="0 0 8 16"><rect x="3" y="10.5" width="2" height="4.5" fill="#5b7fc6"/><circle cx="4" cy="8" r="2" fill="#fff" stroke="#5b7fc6" stroke-width="2"/></svg><svg class="abs" style="left:20px;top:16px" width="16" height="16" viewBox="0 0 16 16"><g fill="#d9a6da"><rect x="1" y="7" width="1" height="1" opacity=".5"/><rect x="3" y="7" width="2" height="1"/><rect x="2" y="9" width="1" height="1" opacity=".8"/><rect x="4" y="9" width="2" height="1"/><rect x="1" y="11" width="2" height="1" opacity=".6"/><rect x="4" y="11" width="3" height="1" fill="#cf8fd0"/></g><g transform="rotate(-27 10.4 7.5)"><rect x="6.6" y="4.6" width="7.6" height="5.8" rx="1.7" fill="url(#gP)" stroke="url(#gPs)" stroke-width=".9"/><rect x="8.6" y="5.2" width="4.6" height="1.4" rx=".7" fill="#f6c4f2" opacity=".6"/></g></svg><div class="t" style="left:40px;top:17px;">S<span class="n33">t</span><span class="p33">a</span><span class="n33">t</span><span class="p33">e</span><span class="n33"> [O</span><span class="p33">6</span><span class="n33">] [</span><span class="p33">892</span><span class="n33">]</span></div><i style="left:27px;top:40px;width:10px;height:1px;background:#b3c7e3;"></i><svg class="abs" style="left:40px;top:32px" width="16" height="16" viewBox="0 0 16 16"><path d="M11.7 0.5 A7.9 7.5 0 0 0 11.7 15.5 Z" fill="url(#gL)" stroke="#b5b5b5" stroke-width="1.1"/></svg><div class="t" style="left:60px;top:33px;"><span class="p33">na</span>m<span class="p33">e</span><span class="n33">: </span>m<span class="p33">o</span>v<span class="p33">e</span>J<span class="p33">ewel</span><span class="n33"> [</span><span class="p33">893</span><span class="n33">]</span></div><i style="left:31px;top:56px;width:6px;height:1px;background:#b3c7e3;"></i><svg class="abs" style="left:24px;top:48px" width="8" height="16" viewBox="0 0 8 16"><rect x="3" y="10.5" width="2" height="4.5" fill="#5b7fc6"/><circle cx="4" cy="8" r="2" fill="#fff" stroke="#5b7fc6" stroke-width="2"/></svg><svg class="abs" style="left:40px;top:48px" width="16" height="16" viewBox="0 0 16 16"><g fill="#d9a6da"><rect x="1" y="7" width="1" height="1" opacity=".5"/><rect x="3" y="7" width="2" height="1"/><rect x="2" y="9" width="1" height="1" opacity=".8"/><rect x="4" y="9" width="2" height="1"/><rect x="1" y="11" width="2" height="1" opacity=".6"/><rect x="4" y="11" width="3" height="1" fill="#cf8fd0"/></g><g transform="rotate(-27 10.4 7.5)"><rect x="6.6" y="4.6" width="7.6" height="5.8" rx="1.7" fill="url(#gP)" stroke="url(#gPs)" stroke-width=".9"/><rect x="8.6" y="5.2" width="4.6" height="1.4" rx=".7" fill="#f6c4f2" opacity=".6"/></g></svg><div class="t" style="left:60px;top:49px;"><span class="p33">pa</span>r<span class="p33">a</span>m<span class="p33">e</span><span class="n33">t</span><span class="p33">e</span>r<span class="n33"> [</span>J<span class="p33">6</span><span class="n33">] [</span><span class="p33">894</span><span class="n33">]</span></div><i style="left:47px;top:72px;width:10px;height:1px;background:#b3c7e3;"></i><svg class="abs" style="left:60px;top:64px" width="16" height="16" viewBox="0 0 16 16"><path d="M11.7 0.5 A7.9 7.5 0 0 0 11.7 15.5 Z" fill="url(#gL)" stroke="#b5b5b5" stroke-width="1.1"/></svg><div class="t" style="left:80px;top:65px;"><span class="p33">di</span>s<span class="n33">t</span><span class="p33">an</span>c<span class="p33">e</span><span class="n33">: </span><span class="p33">117</span><span class="n33">.</span><span class="p33">6394697122673</span><span class="n33"> [</span><span class="p33">895</span><span class="n33">]</span></div><i style="left:47px;top:88px;width:10px;height:1px;background:#b3c7e3;"></i><svg class="abs" style="left:60px;top:80px" width="16" height="16" viewBox="0 0 16 16"><path d="M11.7 0.5 A7.9 7.5 0 0 0 11.7 15.5 Z" fill="url(#gL)" stroke="#b5b5b5" stroke-width="1.1"/></svg><div class="t" style="left:80px;top:81px;">X<span class="n33">: </span><span class="p33">510</span><span class="n33">.</span><span class="p33">84011673035513</span><span class="n33"> [</span><span class="p33">896</span><span class="n33">]</span></div><i style="left:47px;top:104px;width:10px;height:1px;background:#b3c7e3;"></i><svg class="abs" style="left:60px;top:96px" width="16" height="16" viewBox="0 0 16 16"><path d="M11.7 0.5 A7.9 7.5 0 0 0 11.7 15.5 Z" fill="url(#gL)" stroke="#b5b5b5" stroke-width="1.1"/></svg><div class="t" style="left:80px;top:97px;">Y<span class="n33">: </span><span class="p33">259</span><span class="n33">.</span><span class="p33">57779330367083</span><span class="n33"> [</span><span class="p33">897</span><span class="n33">]</span></div><i style="left:47px;top:120px;width:10px;height:1px;background:#b3c7e3;"></i><svg class="abs" style="left:60px;top:112px" width="16" height="16" viewBox="0 0 16 16"><path d="M11.7 0.5 A7.9 7.5 0 0 0 11.7 15.5 Z" fill="url(#gL)" stroke="#b5b5b5" stroke-width="1.1"/></svg><div class="t" style="left:80px;top:113px;"><span class="p33">N</span>AME<span class="n33">: </span>J<span class="p33">ewel_1698</span><span class="n33"> [</span><span class="p33">898</span><span class="n33">]</span></div><i style="left:47px;top:136px;width:10px;height:1px;background:#b3c7e3;"></i><svg class="abs" style="left:60px;top:128px" width="16" height="16" viewBox="0 0 16 16"><path d="M11.7 0.5 A7.9 7.5 0 0 0 11.7 15.5 Z" fill="url(#gL)" stroke="#b5b5b5" stroke-width="1.1"/></svg><div class="t" style="left:80px;top:129px;"><span class="p33">C</span><span class="n33">O</span><span class="p33">L</span><span class="n33">O</span><span class="p33">R</span><span class="n33">: G</span>r<span class="p33">een</span><span class="n33"> [</span><span class="p33">899</span><span class="n33">]</span></div>
</div>
</div>
</body></html>
